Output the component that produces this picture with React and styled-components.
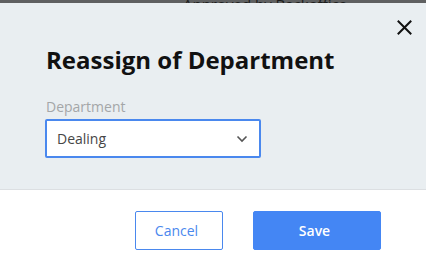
import React from "react";
import styled, { createGlobalStyle } from "styled-components";

const Global = createGlobalStyle`
  html, body { margin: 0; padding: 0; background: #ffffff; }
  body { font-family: "Open Sans", "Liberation Sans", sans-serif; }
  * { box-sizing: border-box; }
`;

const Page = styled.div`
  width: 426px;
  height: 268px;
  display: flex;
  flex-direction: column;
  overflow: hidden;
`;

const Backdrop = styled.div`
  height: 3px;
  background: #5f6061;
  overflow: hidden;
  position: relative;
`;

const BackdropText = styled.div`
  position: absolute;
  left: 183px;
  bottom: -9px;
  font-size: 15px;
  line-height: 15px;
  color: #1c1c1c;
  white-space: nowrap;
`;

const Header = styled.div`
  height: 187px;
  background: #e9eef1;
  border-bottom: 1px solid #dcdfe2;
  position: relative;
  padding: 40px 46px 0 45px;
`;

const Close = styled.button`
  position: absolute;
  top: 15px;
  right: 13px;
  width: 18px;
  height: 18px;
  border: none;
  background: none;
  padding: 0;
  display: flex;
  align-items: center;
  justify-content: center;
`;

const Title = styled.h1`
  margin: 0 0 0 1px;
  font-size: 24px;
  line-height: 33px;
  font-weight: 700;
  color: #111111;
`;

const Label = styled.div`
  margin: 22px 0 0 1px;
  font-size: 14px;
  line-height: 17px;
  color: #a4a6a8;
`;

const Select = styled.div`
  margin-top: 4px;
  width: 216px;
  height: 39px;
  border: 2px solid #4a88ee;
  border-radius: 2px;
  background: #ffffff;
  display: flex;
  align-items: center;
  justify-content: space-between;
  padding: 0 11px 0 10px;
  font-size: 14px;
  color: #464646;
`;

const Footer = styled.div`
  flex: 1;
  display: flex;
  justify-content: flex-end;
  align-items: flex-start;
  gap: 30px;
  padding: 21px 45px 0 0;
`;

const Button = styled.button`
  height: 39px;
  width: ${p => p.$w}px;
  border-radius: 2px;
  font-family: "Open Sans", "Liberation Sans", sans-serif;
  font-size: 14px;
  font-weight: ${p => (p.$primary ? 600 : 400)};
  border: 1px solid #4a88ee;
  background: ${p => (p.$primary ? "#4486f4" : "#ffffff")};
  color: ${p => (p.$primary ? "#ffffff" : "#4a88ee")};
  border-color: ${p => (p.$primary ? "#4486f4" : "#4a88ee")};
  padding: 0 5px 0 0;
`;

export default function App() {
  return (
    <>
      <Global />
      <Page>
        <Backdrop>
          <BackdropText>Approved by Backoffice</BackdropText>
        </Backdrop>
        <Header>
          <Close aria-label="Close">
            <svg width="15" height="15" viewBox="0 0 15 15">
              <path d="M1.5 1.5 L13.5 13.5 M13.5 1.5 L1.5 13.5" stroke="#111" strokeWidth="2" strokeLinecap="square" />
            </svg>
          </Close>
          <Title>Reassign of Department</Title>
          <Label>Department</Label>
          <Select>
            <span>Dealing</span>
            <svg width="12" height="8" viewBox="0 0 12 8">
              <path d="M1.5 1.5 L6 6 L10.5 1.5" stroke="#555" strokeWidth="1.6" fill="none" />
            </svg>
          </Select>
        </Header>
        <Footer>
          <Button $w={88}>Cancel</Button>
          <Button $w={128} $primary>Save</Button>
        </Footer>
      </Page>
    </>
  );
}
